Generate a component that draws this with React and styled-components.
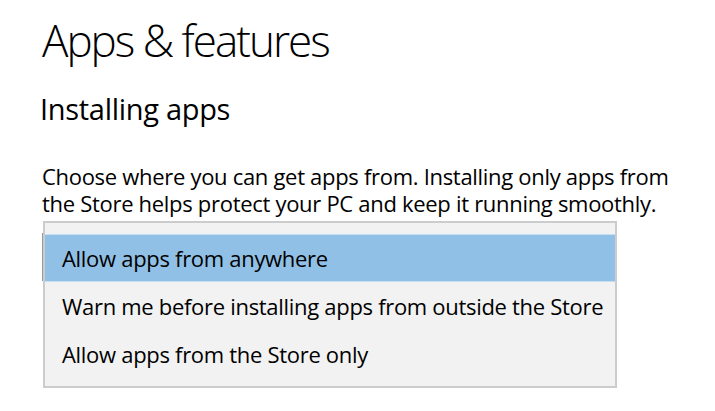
import React from 'react';
import styled, { createGlobalStyle } from 'styled-components';

const GlobalStyle = createGlobalStyle`
  html, body {
    margin: 0;
    padding: 0;
    background: #ffffff;
  }
  body {
    font-family: "Open Sans", "Noto Sans", sans-serif;
    color: #000000;
  }
`;

const options = [
  { id: 'anywhere', label: 'Allow apps from anywhere' },
  { id: 'warn', label: 'Warn me before installing apps from outside the Store' },
  { id: 'store', label: 'Allow apps from the Store only' }
];

const App = () => {
  const selected = 'anywhere';
  const current = options.find(option => option.id === selected);

  return (
    <>
      <GlobalStyle />
      <Page>
        <PageTitle>Apps &amp; features</PageTitle>
        <SectionTitle>Installing apps</SectionTitle>
        <Description>
          Choose where you can get apps from. Installing only apps from
          <br />
          the Store helps protect your PC and keep it running smoothly.
        </Description>
        <Field>
          <FieldValue>{current.label}</FieldValue>
          <Menu>
            {options.map(option => (
              <MenuItem key={option.id} selected={option.id === selected}>
                {option.label}
              </MenuItem>
            ))}
          </Menu>
        </Field>
      </Page>
    </>
  );
};

const Page = styled.div`
  padding: 12px 0 0 42px;
  width: 715px;
  height: 411px;
  box-sizing: border-box;
  overflow: hidden;
`;

const PageTitle = styled.h1`
  font-size: 44px;
  font-weight: 300;
  line-height: 56px;
  letter-spacing: -2px;
  margin: 0;
`;

const SectionTitle = styled.h2`
  font-size: 29px;
  font-weight: 400;
  line-height: 40px;
  letter-spacing: -0.3px;
  margin: 21px 0 0 -2px;
`;

const Description = styled.p`
  font-size: 22px;
  line-height: 27px;
  letter-spacing: -0.3px;
  margin: 34px 0 0 0;
`;

const Field = styled.div`
  position: relative;
  margin-top: 16px;
  width: 574px;
  height: 48px;
  border: 2px solid #999999;
  box-sizing: border-box;
`;

const FieldValue = styled.div`
  font-size: 22px;
  letter-spacing: -0.3px;
  line-height: 44px;
  padding-left: 18px;
`;

const Menu = styled.ul`
  position: absolute;
  left: -1px;
  top: -14px;
  width: 574px;
  height: 167px;
  box-sizing: border-box;
  margin: 0;
  padding: 11px 0 0 0;
  list-style: none;
  background: #f2f2f2;
  border: 2px solid #cccccc;
`;

const MenuItem = styled.li`
  height: 48px;
  box-sizing: border-box;
  display: flex;
  align-items: center;
  padding-left: 17px;
  font-size: 22px;
  letter-spacing: -0.3px;
  background: ${props => (props.selected ? '#91c0e6' : 'transparent')};
  border-top: 1px solid ${props => (props.selected ? '#c7ddf1' : 'transparent')};
  border-bottom: 1px solid ${props => (props.selected ? '#c7ddf1' : 'transparent')};
`;

export default App;
